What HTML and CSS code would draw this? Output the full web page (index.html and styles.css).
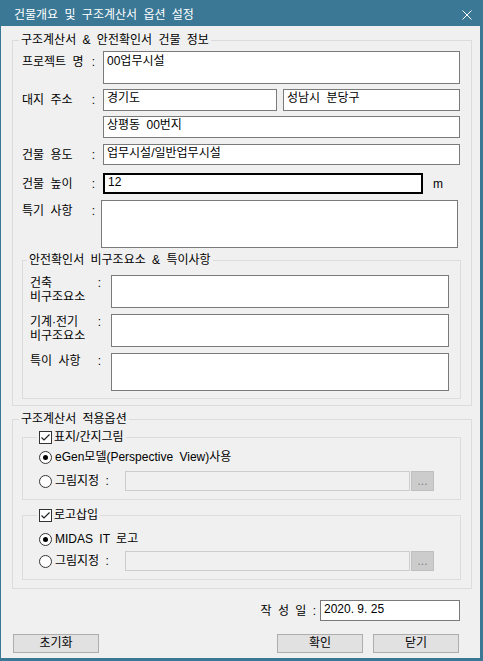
FILE: index.html
```html
<!DOCTYPE html>
<html lang="ko">
<head>
    <meta charset="UTF-8">
    <meta name="viewport" content="width=device-width, initial-scale=1.0">
    <title>건물개요 및 구조계산서 옵션 설정</title>
    <link rel="stylesheet" href="styles.css">
</head>
<body>
    <div class="window">
        <div class="titlebar">
            <span class="title">건물개요 및 구조계산서 옵션 설정</span>
            <span class="close">
                <svg width="10" height="10" viewBox="0 0 10 10"><path d="M0.5 0.5L9.5 9.5M9.5 0.5L0.5 9.5" stroke="#ffffff" stroke-width="1"/></svg>
            </span>
        </div>

        <div class="dialog">
            <!-- 건물 정보 -->
            <fieldset class="group info">
                <legend>구조계산서 &amp; 안전확인서 건물 정보</legend>

                <div class="row row-project">
                    <label class="label"><span>프로젝트 명</span><span>:</span></label>
                    <div class="edit tall">00업무시설</div>
                </div>
                <div class="row row-address">
                    <label class="label"><span>대지 주소</span><span>:</span></label>
                    <div class="pair">
                        <div class="edit">경기도</div>
                        <div class="edit">성남시 분당구</div>
                    </div>
                </div>
                <div class="row row-address2">
                    <span class="label"></span>
                    <div class="edit">상평동 00번지</div>
                </div>
                <div class="row row-usage">
                    <label class="label"><span>건물 용도</span><span>:</span></label>
                    <div class="edit thin">업무시설/일반업무시설</div>
                </div>
                <div class="row row-height">
                    <label class="label"><span>건물 높이</span><span>:</span></label>
                    <div class="edit thin focus">12</div>
                    <span class="unit">m</span>
                </div>
                <div class="row row-memo">
                    <label class="label"><span>특기 사항</span><span>:</span></label>
                    <div class="edit memo"></div>
                </div>

                <!-- 비구조요소 -->
                <fieldset class="group safety">
                    <legend>안전확인서 비구조요소 &amp; 특이사항</legend>
                    <div class="row">
                        <label class="label two"><span>건축<br>비구조요소</span><span>:</span></label>
                        <div class="edit tall"></div>
                    </div>
                    <div class="row row-next">
                        <label class="label two"><span>기계·전기<br>비구조요소</span><span>:</span></label>
                        <div class="edit tall"></div>
                    </div>
                    <div class="row row-next">
                        <label class="label two"><span>특이 사항</span><span>:</span></label>
                        <div class="edit taller"></div>
                    </div>
                </fieldset>
            </fieldset>

            <!-- 적용옵션 -->
            <fieldset class="group options">
                <legend>구조계산서 적용옵션</legend>

                <fieldset class="group sub cover">
                    <legend class="check-legend">
                        <span class="check"><svg width="11" height="11" viewBox="0 0 11 11"><path d="M1.5 5.5L4 8L9.5 2.5" fill="none" stroke="#222222" stroke-width="1.2"/></svg></span>
                        표지/간지그림
                    </legend>
                    <div class="opt">
                        <span class="radio on"></span>
                        <span>eGen모델(Perspective View)사용</span>
                    </div>
                    <div class="opt file-row">
                        <span class="opt-name"><span class="radio"></span><span>그림지정 :</span></span>
                        <div class="edit off"></div>
                        <button class="browse" type="button" disabled>...</button>
                    </div>
                </fieldset>

                <fieldset class="group sub logo">
                    <legend class="check-legend">
                        <span class="check"><svg width="11" height="11" viewBox="0 0 11 11"><path d="M1.5 5.5L4 8L9.5 2.5" fill="none" stroke="#222222" stroke-width="1.2"/></svg></span>
                        로고삽입
                    </legend>
                    <div class="opt">
                        <span class="radio on"></span>
                        <span>MIDAS IT 로고</span>
                    </div>
                    <div class="opt file-row">
                        <span class="opt-name"><span class="radio"></span><span>그림지정 :</span></span>
                        <div class="edit off"></div>
                        <button class="browse" type="button" disabled>...</button>
                    </div>
                </fieldset>
            </fieldset>

            <div class="date-row">
                <span>작 성 일 :</span>
                <div class="edit thin date">2020. 9. 25</div>
            </div>

            <div class="buttons">
                <button class="btn" type="button">초기화</button>
                <span class="spacer"></span>
                <button class="btn" type="button">확인</button>
                <button class="btn" type="button">닫기</button>
            </div>
        </div>
    </div>
</body>
</html>
```

FILE: styles.css
```css
/* General Reset */
* {
    margin: 0;
    padding: 0;
    box-sizing: border-box;
}

body {
    font-family: "Liberation Sans", "Noto Sans CJK KR", sans-serif;
    font-size: 12px;
    line-height: 14px;
    word-spacing: 3px;
    color: #000;
    background-color: #3a7896;
}

/* Window frame */
.window {
    width: 483px;
    height: 661px;
    display: flex;
    flex-direction: column;
    background-color: #3a7896;
}

.titlebar {
    height: 26px;
    display: flex;
    align-items: flex-start;
    justify-content: space-between;
    padding: 8px 11px 0 14px;
    color: #ffffff;
}

.close svg {
    display: block;
    margin-top: 2px;
}

.dialog {
    flex: 1;
    margin: 0 3px 3px 1px;
    padding: 7px 8px 0 11px;
    background-color: #f0f0f0;
}

/* Group boxes */
.group {
    border: 1px solid #dcdcdc;
    min-width: 0;
}

.group > legend {
    margin-left: -3px;
    padding: 0 2px;
    line-height: 15px;
}

.info {
    padding: 3px 11px 6px 9px;
}

.safety {
    margin: 5px -1px 0 0;
    padding: 7px 11px 7px 7px;
}

.options {
    margin-top: 6px;
    padding: 4px 10px 8px 9px;
}

.sub {
    padding: 3px 0 8px 16px;
}

.sub.logo {
    margin-top: 9px;
    padding-top: 7px;
}

.group > .check-legend {
    display: flex;
    align-items: center;
    gap: 2px;
    margin-left: -2px;
    line-height: 13px;
}

/* Rows */
.row {
    display: grid;
    grid-template-columns: 81px 1fr;
}

.row-address,
.row-address2 {
    margin-top: 5px;
}

.row-next,
.row-usage,
.row-memo {
    margin-top: 6px;
}

.row-height {
    margin-top: 8px;
    grid-template-columns: 81px 320px auto;
}

.label {
    display: flex;
    justify-content: space-between;
    padding: 4px 8px 0 0;
}

.label.two {
    padding: 1px 10px 0 0;
}

.pair {
    display: grid;
    grid-template-columns: 174px 1fr;
    gap: 6px;
}

.unit {
    margin-left: 10px;
    padding-top: 4px;
}

/* Edit boxes */
.edit {
    height: 22px;
    padding: 1px 3px 0;
    background-color: #ffffff;
    border: 1px solid #7a7a7a;
    white-space: nowrap;
    overflow: hidden;
}

.edit.thin {
    height: 21px;
}

.edit.tall {
    height: 33px;
    padding-top: 2px;
}

.edit.taller {
    height: 38px;
}

.edit.memo {
    height: 48px;
    margin: 0 2px 0 -2px;
}

.edit.focus {
    border: 2px solid #000000;
    padding: 0 3px;
}

.edit.off {
    width: 285px;
    height: 20px;
    background-color: #f0f0f0;
    border-color: #cccccc;
}

/* Check and radio */
.check {
    width: 13px;
    height: 13px;
    border: 1px solid #333333;
    background-color: #ffffff;
}

.check svg {
    display: block;
}

.radio {
    width: 13px;
    height: 13px;
    flex: none;
    display: inline-flex;
    align-items: center;
    justify-content: center;
    border: 1px solid #333333;
    border-radius: 50%;
    background-color: #ffffff;
}

.radio.on::after {
    content: "";
    width: 5px;
    height: 5px;
    border-radius: 50%;
    background-color: #000000;
}

.opt {
    display: flex;
    align-items: center;
    gap: 3px;
    height: 20px;
}

.cover .file-row {
    margin-top: 4px;
}

.logo .file-row {
    margin-top: 2px;
}

.file-row {
    gap: 1px;
}

.opt-name {
    width: 85px;
    display: flex;
    align-items: center;
    gap: 3px;
}

.browse {
    width: 23px;
    height: 20px;
    border: 1px solid #bfbfbf;
    background-color: #cccccc;
    color: #838383;
    font: inherit;
    line-height: 14px;
}

/* Date and buttons */
.date-row {
    display: flex;
    justify-content: flex-end;
    align-items: center;
    gap: 4px;
    margin: 11px 12px 0 0;
}

.edit.date {
    width: 140px;
    word-spacing: 0;
}

.buttons {
    display: flex;
    gap: 10px;
    margin: 13px 13px 0 1px;
}

.spacer {
    flex: 1;
}

.btn {
    width: 86px;
    height: 19px;
    border: 1px solid #adadad;
    background-color: #e1e1e1;
    color: #000;
    font: inherit;
    line-height: 17px;
}
```
